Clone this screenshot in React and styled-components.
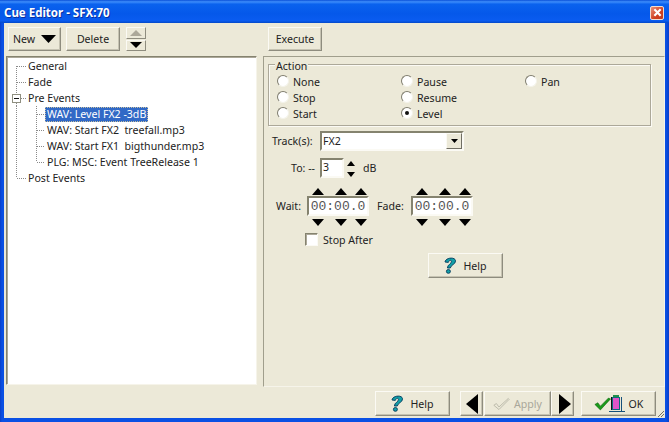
import React from "react";
import styled, { createGlobalStyle } from "styled-components";

const Global = createGlobalStyle`
  html, body { margin: 0; padding: 0; background: #ece9d8; overflow: hidden; }
  body { font: 10.6px "Noto Sans", "Liberation Sans", sans-serif; color: #222; }
`;

const Win = styled.div`
  width: 669px; height: 422px; box-sizing: border-box; display: flex; flex-direction: column;
  background: linear-gradient(90deg,#0a3fc8 0,#0a50e4 2px,#0a50e4 666px,#0a3fc8 669px);
`;
const TitleBar = styled.div`
  height: 23px; flex: none; display: flex; align-items: center; justify-content: space-between;
  padding: 2px 5px 0 4px; box-sizing: border-box;
  background: linear-gradient(180deg,#0a50d8 0%,#3d8dfb 8%,#0a62ee 18%,#0558ea 60%,#0a5cf0 90%,#0348c8 100%);
`;
const Title = styled.span`
  color: #fff; font: bold 11.5px "Noto Sans", sans-serif; text-shadow: 1px 1px 0 #0a2f9e;
`;
const CloseBtn = styled.div`
  width: 14px; height: 14px; box-sizing: border-box; border: 1px solid #f0ddd0; border-radius: 2px;
  background: linear-gradient(135deg,#e8907a,#d0401f 60%,#c03a20);
  display: flex; align-items: center; justify-content: center;
`;
const Content = styled.div`
  flex: 1; margin: 0 4px 4px 4px; background: #ece9d8; display: flex; flex-direction: column; min-height: 0;
`;
const Upper = styled.div`
  height: 364px; flex: none; box-sizing: border-box; display: grid; grid-template-columns: 251px 402px;
  column-gap: 6px; padding: 4px 0 0 2px;
`;
const Column = styled.div`
  display: flex; flex-direction: column; min-width: 0;
`;
const Toolbar = styled.div`
  height: 24px; display: flex; align-items: stretch; margin-bottom: 5px; padding-left: ${p => p.$pad || 0}px;
`;
const Button = styled.button`
  box-sizing: border-box; width: ${p => p.$w}px; height: ${p => p.$h || 24}px; padding: 0 0 0 ${p => p.$pl || 0}px;
  margin-left: ${p => p.$ml || 0}px; background: #ece9d8; font: inherit; color: ${p => p.$off ? "#a9a79a" : "#222"};
  border: 1px solid; border-color: #fbfaf4 #8e8c7e #8e8c7e #fbfaf4;
  box-shadow: inset -1px -1px 0 #c6c3b2;
  display: flex; align-items: center; justify-content: center; gap: ${p => p.$gap ?? 6}px;
`;
const Stepper = styled.div`
  width: 20px; margin-left: 6px; display: flex; flex-direction: column; gap: 1px;
`;
const StepBtn = styled.div`
  flex: 1; box-sizing: border-box; background: #ece9d8; display: flex; align-items: center; justify-content: center;
  border: 1px solid; border-color: #fbfaf4 #8e8c7e #8e8c7e #fbfaf4;
`;
const Tree = styled.div`
  flex: none; height: 329px; box-sizing: border-box; background: #fff; padding: 1px 0 0 0;
  border: 1px solid; border-color: #85836f #f6f4ea #f6f4ea #85836f;
  box-shadow: inset 1px 1px 0 #aca899;
`;
const TreeRow = styled.div`
  height: 16px; display: flex; align-items: center;
`;
const Node = styled.span`
  padding: 0 2px; height: 15px; line-height: 15px; white-space: pre; box-sizing: border-box;
  ${p => p.$sel && `background:#3169c6;color:#fff;outline:1px dotted #c8c0a0;outline-offset:-1px;`}
`;
const Panel = styled.div`
  flex: none; height: 331px; box-sizing: border-box; padding: 7px 0 0 4px;
  border: 1px solid; border-color: #a09e8c #f6f4ea #f6f4ea #a09e8c;
`;
const Group = styled.div`
  box-sizing: border-box; width: 383px; height: 62px; padding: 0 0 0 8px;
  border: 1px solid #aca899; box-shadow: 1px 1px 0 #fbfaf4, inset 1px 1px 0 #fbfaf4;
`;
const Legend = styled.div`
  width: fit-content; padding: 0 1px; margin: -4px 0 0 -2px; line-height: 11px; background: #ece9d8;
`;
const RadioGrid = styled.div`
  display: grid; grid-template-columns: 124px 124px 100px; grid-auto-rows: 16px; margin-top: 2px;
`;
const RadioLabel = styled.label`
  display: flex; align-items: center; gap: 4px;
`;
const Radio = styled.span`
  width: 12px; height: 12px; box-sizing: border-box; border-radius: 50%; background: #fff; margin-bottom: 2px;
  border: 1px solid; border-color: #7f7d6e #f4f3ea #f4f3ea #7f7d6e; flex: none;
  display: flex; align-items: center; justify-content: center;
  &::after { content: ""; width: 4px; height: 4px; border-radius: 50%; background: ${p => p.$on ? "#111" : "transparent"}; }
`;
const TrackRow = styled.div`
  display: flex; align-items: center; margin: 5px 0 0 4px; height: 20px;
`;
const FieldLabel = styled.span`
  width: ${p => p.$w}px; flex: none; white-space: pre;
`;
const Combo = styled.div`
  box-sizing: border-box; width: 144px; height: 20px; background: #fff; display: flex;
  align-items: stretch; justify-content: space-between; padding-left: 1px; line-height: 17px;
  border: 2px solid; border-color: #85836f #fbfaf4 #fbfaf4 #85836f;
`;
const ComboBtn = styled.div`
  width: 16px; box-sizing: border-box; background: #ece9d8; display: flex; align-items: center; justify-content: center;
  border: 1px solid; border-color: #fbfaf4 #716f64 #716f64 #fbfaf4;
`;
const ToRow = styled.div`
  display: flex; align-items: center; height: 20px; margin: 7px 0 0 23px;
`;
const ToInput = styled.div`
  box-sizing: border-box; width: 24px; height: 20px; background: #fff; padding-left: 1px; line-height: 15px;
  border: 2px solid; border-color: #85836f #fbfaf4 #fbfaf4 #85836f;
`;
const SpinCol = styled.div`
  width: 8px; height: 16px; margin: 1px 8px 0 3px; display: flex; flex-direction: column; justify-content: space-between;
  svg { display: block; }
`;
const TimeArea = styled.div`
  display: grid; grid-template-columns: 39px 62px 42px 62px; margin: 9px 0 0 0; grid-template-rows: 9px 20px 12px;
`;
const TimeLabel = styled.div`
  grid-row: 2; display: flex; align-items: center; padding-left: ${p => p.$pl || 0}px;
`;
const TimeInput = styled.div`
  grid-row: 2; box-sizing: border-box; height: 20px; background: #fff; display: flex; align-items: center; justify-content: center;
  font: 13px "Liberation Mono", "DejaVu Sans Mono", monospace; color: #555;
  border: 2px solid; border-color: #85836f #fbfaf4 #fbfaf4 #85836f;
`;
const ArrowRow = styled.div`
  grid-row: ${p => p.$row}; grid-column: ${p => p.$col}; display: grid; grid-template-columns: 21px 26px 14px;
  justify-items: center; align-items: center;
  svg { display: block; }
`;
const CheckRow = styled.label`
  display: flex; align-items: center; gap: 5px; margin: 5px 0 0 37px; height: 13px;
`;
const Checkbox = styled.span`
  width: 13px; height: 13px; box-sizing: border-box; background: #fff;
  border: 1px solid; border-color: #85836f #fbfaf4 #fbfaf4 #85836f; box-shadow: inset 1px 1px 0 #aca899;
`;
const HelpRow = styled.div`
  display: flex; margin: 7px 0 0 160px;
`;
const Footer = styled.div`
  flex: 1; position: relative; display: flex; justify-content: flex-end; align-items: flex-start; padding: 4px 9px 0 0;
`;
const Grip = styled.svg`
  position: absolute; right: 0; bottom: 0;
`;
const OkLabel = styled.span`
  margin-left: 4px;
`;
const Overlap = styled.span`
  display: flex; margin-left: -3px;
`;

const Tri = ({ dir = "down", w = 12, h = 7, c = "#000" }) => {
  const pts = {
    down: `0,0 ${w},0 ${w / 2},${h}`,
    up: `0,${h} ${w},${h} ${w / 2},0`,
    left: `${w},0 ${w},${h} 0,${h / 2}`,
    right: `0,0 ${w},${h / 2} 0,${h}`,
  }[dir];
  return <svg width={w} height={h} viewBox={`0 0 ${w} ${h}`}><polygon points={pts} fill={c} /></svg>;
};

const D = ({ x1, y1, x2, y2 }) => (
  <line x1={x1} y1={y1} x2={x2} y2={y2} stroke="#8a8a8a" strokeWidth="1" strokeDasharray="1 1" />
);
const Connector = ({ kind }) => {
  if (kind === "first") return <svg width="19" height="16"><D x1="9.5" y1="8" x2="9.5" y2="16" /><D x1="10" y1="8.5" x2="19" y2="8.5" /></svg>;
  if (kind === "leaf") return <svg width="19" height="16"><D x1="9.5" y1="0" x2="9.5" y2="16" /><D x1="10" y1="8.5" x2="19" y2="8.5" /></svg>;
  if (kind === "last") return <svg width="19" height="16"><D x1="9.5" y1="0" x2="9.5" y2="8" /><D x1="10" y1="8.5" x2="19" y2="8.5" /></svg>;
  if (kind === "open") return (
    <svg width="19" height="16">
      <D x1="9.5" y1="0" x2="9.5" y2="4" /><D x1="9.5" y1="13" x2="9.5" y2="16" /><D x1="14" y1="8.5" x2="19" y2="8.5" />
      <rect x="5.5" y="4.5" width="8" height="8" fill="#fff" stroke="#8f8f80" />
      <line x1="7" y1="8.5" x2="12" y2="8.5" stroke="#111" />
    </svg>
  );
  return (
    <svg width="38" height="16">
      <D x1="9.5" y1="0" x2="9.5" y2="16" />
      <D x1="29.5" y1="0" x2="29.5" y2={kind === "sublast" ? 8 : 16} />
      <D x1="30" y1="8.5" x2="38" y2="8.5" />
    </svg>
  );
};

const HelpIcon = () => (
  <svg width="12" height="17" viewBox="0 0 12 17">
    <path d="M1 5 C1.5 0.5 11.5 -0.5 11.5 4 C11.5 7.5 7 7.5 6.3 11 L3.4 11 C3.4 7.5 7.8 6.8 7.5 4.2 C7.2 2.8 5 3 4.3 5.4 Z" fill="#12a0a8" stroke="#063a5c" strokeWidth=".9" />
    <ellipse cx="4.4" cy="14.4" rx="2" ry="1.9" fill="#12a0a8" stroke="#063a5c" strokeWidth=".9" />
  </svg>
);
const Check = ({ off }) => (
  <svg width="17" height="14" viewBox="0 0 20 15">
    {off
      ? <path d="M1 9 L4 7 L7 11 L18 1 L19 2 L7 14 Z" fill="none" stroke="#b5b3a4" strokeWidth="1" />
      : <path d="M1 8 L4.5 6 L7.5 10 L17 0.5 L19.5 1.5 L7.5 14.5 Z" fill="#1a9a1a" stroke="#0a5a0a" strokeWidth=".6" />}
  </svg>
);
const DoorIcon = () => (
  <svg width="17" height="18" viewBox="0 0 17 18">
    <rect x="5" y="0" width="6" height="2" fill="#1e8f4a" />
    <rect x="3" y="2" width="1" height="13" fill="#111" />
    <rect x="4" y="2" width="8" height="13" fill="#e055c8" />
    <rect x="4.5" y="2.5" width="7" height="12" fill="none" stroke="#0b6d7a" />
    <rect x="13" y="2" width="1" height="14" fill="#16507a" />
    <rect x="1" y="16" width="16" height="1" fill="#16507a" />
  </svg>
);

const Arrows = ({ row, col, dir }) => (
  <ArrowRow $row={row} $col={col}>
    <Tri dir={dir} /><Tri dir={dir} /><Tri dir={dir} />
  </ArrowRow>
);

const Help = () => (
  <Button $w={75} $h={25} $gap={7}><HelpIcon />Help</Button>
);

export default function App() {
  return (
    <Win>
      <Global />
      <TitleBar>
        <Title>Cue Editor - SFX:70</Title>
        <CloseBtn>
          <svg width="9" height="9" viewBox="0 0 10 10"><path d="M1.5 1.5 L8.5 8.5 M8.5 1.5 L1.5 8.5" stroke="#fff" strokeWidth="2.4" /></svg>
        </CloseBtn>
      </TitleBar>
      <Content>
        <Upper>
          <Column>
            <Toolbar $pad={2}>
              <Button $w={53}>New<Tri w={15} h={8} /></Button>
              <Button $w={54} $ml={5}>Delete</Button>
              <Stepper>
                <StepBtn><Tri dir="up" w={12} h={6} c="#aca899" /></StepBtn>
                <StepBtn><Tri w={12} h={6} /></StepBtn>
              </Stepper>
            </Toolbar>
            <Tree>
              <TreeRow><Connector kind="first" /><Node>General</Node></TreeRow>
              <TreeRow><Connector kind="leaf" /><Node>Fade</Node></TreeRow>
              <TreeRow><Connector kind="open" /><Node>Pre Events</Node></TreeRow>
              <TreeRow><Connector kind="sub" /><Node $sel>WAV: Level FX2 -3dB</Node></TreeRow>
              <TreeRow><Connector kind="sub" /><Node>WAV: Start FX2  treefall.mp3</Node></TreeRow>
              <TreeRow><Connector kind="sub" /><Node>WAV: Start FX1  bigthunder.mp3</Node></TreeRow>
              <TreeRow><Connector kind="sublast" /><Node>PLG: MSC: Event TreeRelease 1</Node></TreeRow>
              <TreeRow><Connector kind="last" /><Node>Post Events</Node></TreeRow>
            </Tree>
          </Column>
          <Column>
            <Toolbar $pad={5}>
              <Button $w={54}>Execute</Button>
            </Toolbar>
            <Panel>
              <Group>
                <Legend>Action</Legend>
                <RadioGrid>
                  <RadioLabel><Radio />None</RadioLabel>
                  <RadioLabel><Radio />Pause</RadioLabel>
                  <RadioLabel><Radio />Pan</RadioLabel>
                  <RadioLabel><Radio />Stop</RadioLabel>
                  <RadioLabel><Radio />Resume</RadioLabel>
                  <span />
                  <RadioLabel><Radio />Start</RadioLabel>
                  <RadioLabel><Radio $on />Level</RadioLabel>
                </RadioGrid>
              </Group>
              <TrackRow>
                <FieldLabel $w={48}>Track(s):</FieldLabel>
                <Combo>FX2<ComboBtn><Tri w={7} h={4} /></ComboBtn></Combo>
              </TrackRow>
              <ToRow>
                <FieldLabel $w={29}>To: --</FieldLabel>
                <ToInput>3</ToInput>
                <SpinCol><Tri dir="up" w={8} h={5} /><Tri w={8} h={5} /></SpinCol>
                dB
              </ToRow>
              <TimeArea>
                <Arrows row={1} col={2} dir="up" />
                <Arrows row={1} col={4} dir="up" />
                <TimeLabel $pl={8}>Wait:</TimeLabel>
                <TimeInput>00:00.0</TimeInput>
                <TimeLabel $pl={8}>Fade:</TimeLabel>
                <TimeInput>00:00.0</TimeInput>
                <Arrows row={3} col={2} dir="down" />
                <Arrows row={3} col={4} dir="down" />
              </TimeArea>
              <CheckRow><Checkbox />Stop After</CheckRow>
              <HelpRow><Help /></HelpRow>
            </Panel>
          </Column>
        </Upper>
        <Footer>
          <Help />
          <Button $w={23} $h={25} $ml={10}><Tri dir="left" w={12} h={20} /></Button>
          <Button $w={67} $h={25} $ml={1} $off $gap={4}><Check off />Apply</Button>
          <Button $w={23} $h={25} $pl={5}><Tri dir="right" w={12} h={20} /></Button>
          <Button $w={75} $h={25} $ml={7} $gap={0}>
            <Check />
            <Overlap><DoorIcon /></Overlap>
            <OkLabel>OK</OkLabel>
          </Button>
          <Grip width="8" height="8" viewBox="0 0 8 8">
            <path d="M7 1 L1 7 M7 4 L4 7" stroke="#716f64" strokeWidth="1" />
          </Grip>
        </Footer>
      </Content>
    </Win>
  );
}
